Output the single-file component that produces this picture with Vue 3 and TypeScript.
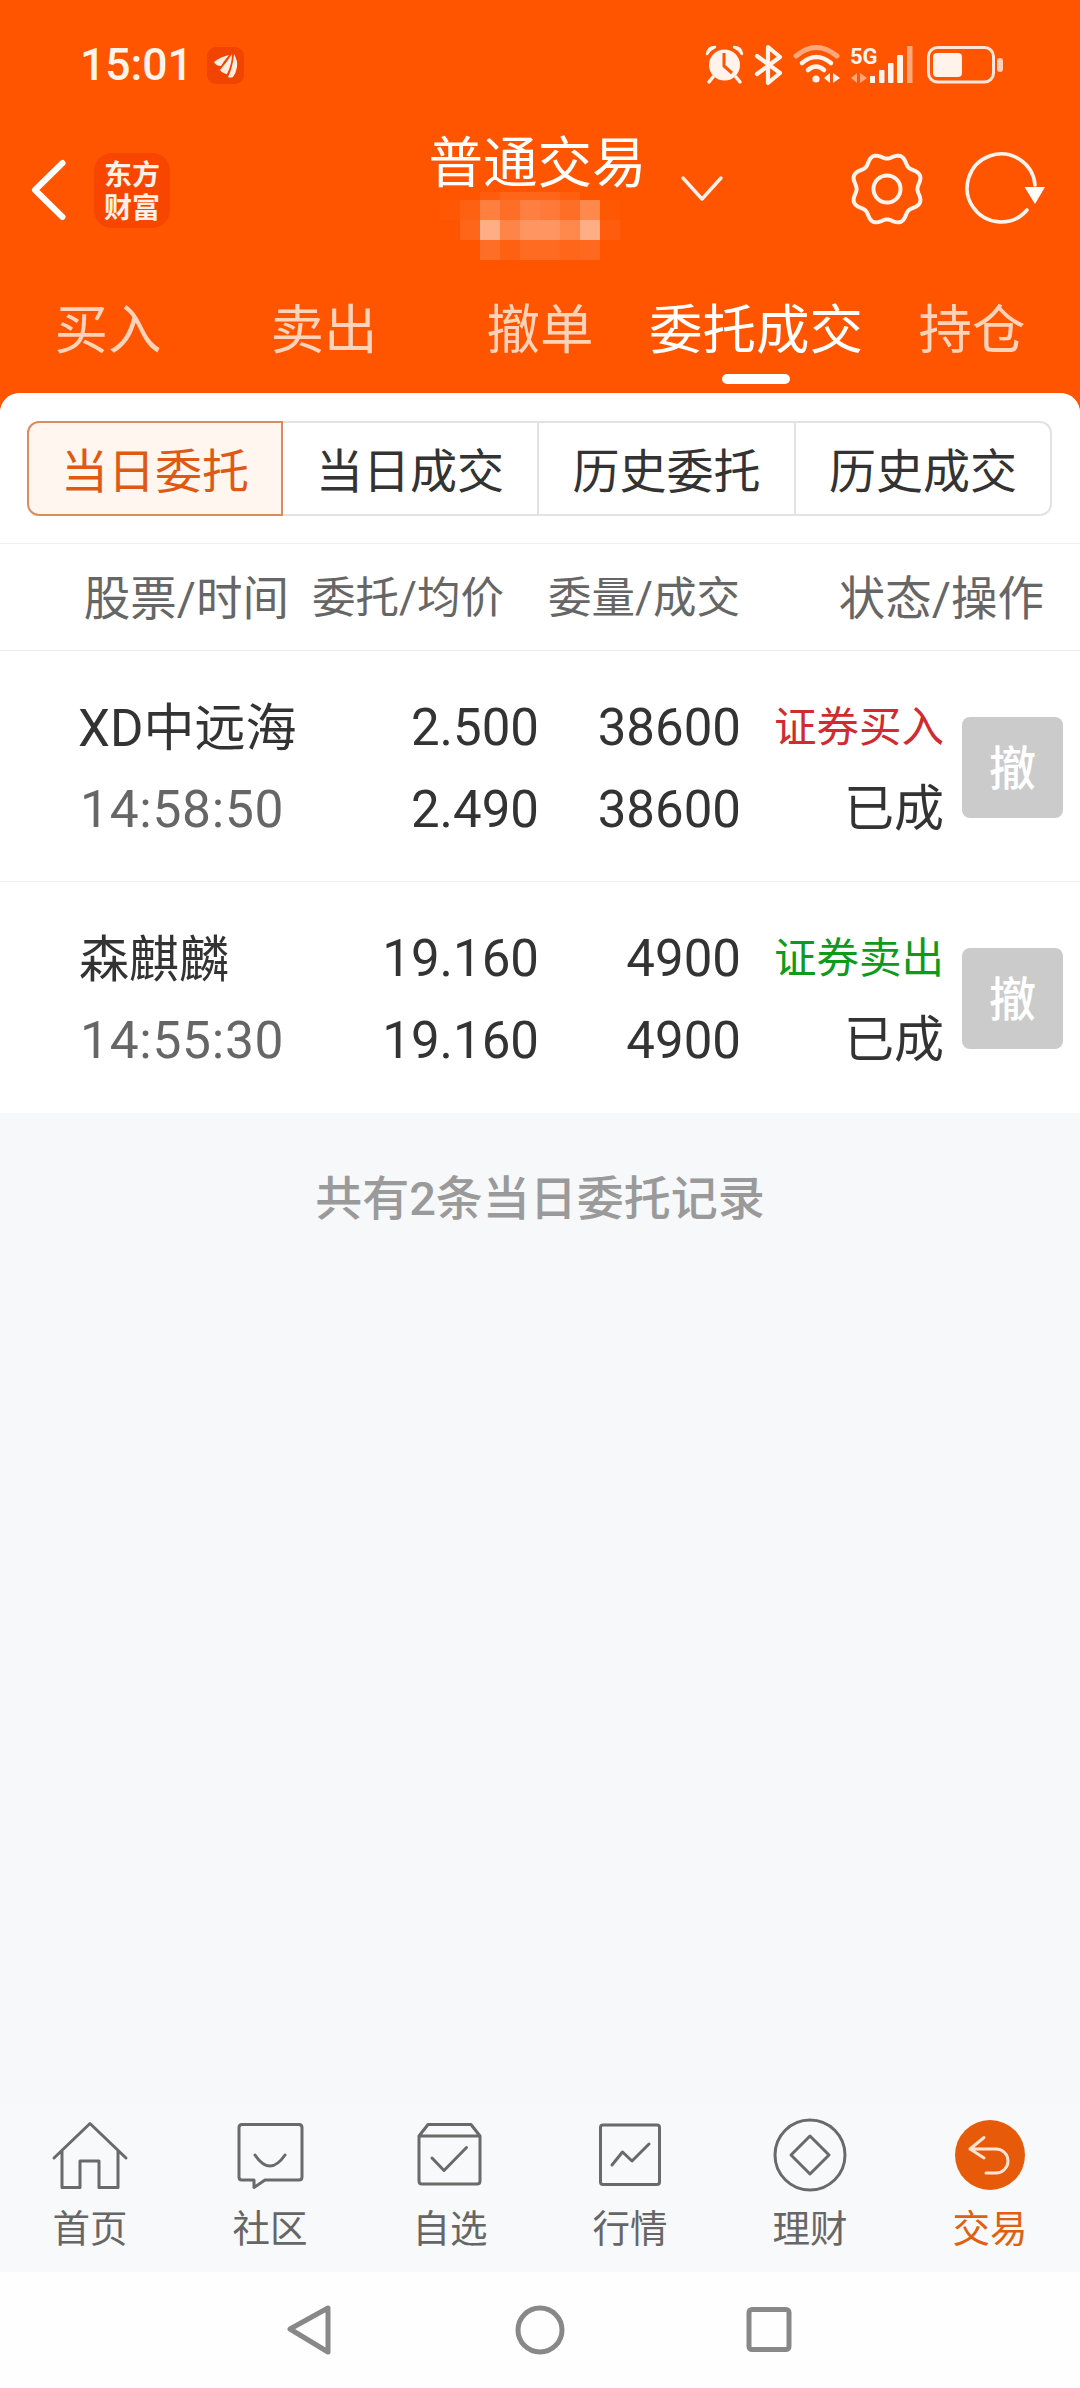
<script setup lang="ts">
const mainTabs = [
  { label: '买入', active: false },
  { label: '卖出', active: false },
  { label: '撤单', active: false },
  { label: '委托成交', active: true },
  { label: '持仓', active: false },
]
const segments = ['当日委托', '当日成交', '历史委托', '历史成交']

const heads = [
  { label: '股票/时间', small: false },
  { label: '委托/均价', small: true },
  { label: '委量/成交', small: true },
  { label: '状态/操作', small: false },
]

const orders = [
  { name: 'XD中远海', nameSmall: false, time: '14:58:50', price: '2.500', avg: '2.490', qty: '38600', done: '38600', side: '证券买入', sideClass: 'buy', status: '已成' },
  { name: '森麒麟', nameSmall: true, time: '14:55:30', price: '19.160', avg: '19.160', qty: '4900', done: '4900', side: '证券卖出', sideClass: 'sell', status: '已成' },
]

const mosaicAlpha = [
  0, 0, 0.05, 0.1, 0.1, 0.1, 0.06, 0, 0,
  0.01, 0.07, 0.25, 0.15, 0.25, 0.22, 0.15, 0.3, 0.02,
  0, 0.1, 0.52, 0.28, 0.38, 0.38, 0.3, 0.52, 0.05,
  0, 0, 0.15, 0.07, 0.13, 0.13, 0.1, 0.12, 0,
]

const gearPath = (() => {
  const pts: string[] = []
  for (let i = 0; i < 144; i++) {
    const t = (i / 144) * Math.PI * 2
    const r = 33 - 2.6 * Math.cos(8 * t)
    const x = 40 + r * Math.sin(t)
    const y = 40 - r * Math.cos(t)
    pts.push(`${x.toFixed(2)} ${y.toFixed(2)}`)
  }
  return 'M' + pts.join('L') + 'Z'
})()

const bottomTabs = [
  { label: '首页', active: false, d: 'M4 43L40 8.5L76 43M12 36V72.5H30V46H49V72.5H68V36' },
  { label: '社区', active: false, d: 'M12 9.5H69Q72 9.5 72 12.5V62Q72 65 69 65H35L24 72.5V65H12Q9 65 9 62V12.5Q9 9.5 12 9.5ZM25 40Q40 62 55 40' },
  { label: '自选', active: false, d: 'M9 21H70M9 21V66Q9 69 12 69H67Q70 69 70 66V21L61 9.5H18L9 21ZM22 43L34 55.5L56.5 32.5' },
  { label: '行情', active: false, d: 'M13 10H67Q69.5 10 69.5 12.5V67Q69.5 69.5 67 69.5H13Q10.5 69.5 10.5 67V12.5Q10.5 10 13 10ZM22 50L32.5 37L42 46L59 29' },
  { label: '理财', active: false, d: 'M5 40A35 35 0 1 1 75 40A35 35 0 1 1 5 40ZM21 40L40 21L59 40L40 59Z' },
  { label: '交易', active: true, d: 'M34 22.5L20 34L34 43M20 34H46A12 12 0 0 1 46 58H36' },
]
</script>

<template>
  <div class="app">
    <header class="header">
      <div class="status">
        <div class="status-left">
          <span class="clock">15:01</span>
          <span class="notify">
            <svg width="37" height="37" viewBox="0 0 37 37" fill="#FFEDE0">
              <path d="M7 15Q13 10 22 8Q17 14 14 19Q9 19 7 15Z" />
              <path d="M13 23Q20 15 25 7Q25 17 20 27Q15 26 13 23Z" />
              <path d="M21 30Q26 20 27 7Q31 14 30 20Q29 26 26 30Q23 31 21 30Z" />
            </svg>
          </span>
        </div>
        <svg class="status-icons" width="310" height="50" viewBox="0 0 310 50">
          <g>
            <circle cx="24.5" cy="25" r="15.5" fill="#FFF3EC" />
            <path d="M7 14Q8 7 15 7Q10 9 7 14ZM42 14Q41 7 34 7Q39 9 42 14Z" fill="#FFF3EC" stroke="#FFF3EC" stroke-width="2.5" stroke-linejoin="round" />
            <path d="M13 37L9 42M36 37L40 42" stroke="#FFF3EC" stroke-width="3.5" stroke-linecap="round" />
            <path d="M24 13V26L32 33" fill="none" stroke="#FF5500" stroke-width="3" />
          </g>
          <path d="M57 16L80 33L68 43V7L80 17L57 34" fill="none" stroke="#FFF3EC" stroke-width="4.2" stroke-linejoin="round" stroke-linecap="round" />
          <g fill="none" stroke-linecap="round">
            <path d="M96 16Q116 -1 137 16" stroke="#FFA77C" stroke-width="5" />
            <path d="M102 23Q116 11 131 23" stroke="#FFF3EC" stroke-width="4.5" />
            <path d="M108 30Q116 23 124 30" stroke="#FFF3EC" stroke-width="4.5" />
          </g>
          <circle cx="116" cy="39" r="3.6" fill="#FFF3EC" />
          <path d="M124 38L130 33V43ZM133 33V43L140 38Z" fill="#FFF3EC" />
          <text x="150" y="24" class="net">5G</text>
          <path d="M151 38L157 33V43ZM160 33V43L167 38Z" fill="#FFA77C" />
          <g fill="#FFF3EC">
            <rect x="170" y="36" width="5" height="7" />
            <rect x="179" y="30" width="5.5" height="13" rx="1" />
            <rect x="188" y="23" width="5.5" height="20" rx="1" />
            <rect x="197" y="15" width="6" height="28" rx="1" />
          </g>
          <rect x="207" y="6" width="5.5" height="37" fill="#FFA77C" />
          <rect x="228.5" y="7.5" width="65" height="34.5" rx="9" fill="none" stroke="#FFE5D8" stroke-width="3" />
          <rect x="233" y="13" width="29" height="24" rx="4" fill="#FFF3EC" />
          <rect x="297" y="18" width="6" height="14" rx="3" fill="#FFD0B5" />
        </svg>
      </div>

      <div class="nav">
        <div class="nav-left">
          <svg width="40" height="68" viewBox="0 0 40 68">
            <path d="M33.5 7L6 34L33.5 61" fill="none" stroke="#fff" stroke-width="6" stroke-linecap="round" stroke-linejoin="round" />
          </svg>
          <div class="logo"><span>东方</span><span>财富</span></div>
        </div>
        <div class="nav-center">
          <div class="title">普通交易</div>
          <div class="mosaic">
            <i
              v-for="(a, i) in mosaicAlpha"
              :key="i"
              :style="{ backgroundColor: `rgba(255,255,255,${a})` }"
            ></i>
          </div>
        </div>
        <svg class="caret" width="48" height="30" viewBox="0 0 48 30">
          <path d="M5 5L24 26L43 5" fill="none" stroke="#FFF0E8" stroke-width="3.4" stroke-linecap="round" stroke-linejoin="round" />
        </svg>
        <div class="nav-right">
          <svg width="80" height="80" viewBox="0 0 80 80" fill="none" stroke="#FFF3EC" stroke-width="4">
            <path :d="gearPath" stroke-linejoin="round" />
            <circle cx="40" cy="40" r="13.5" />
          </svg>
          <svg width="84" height="80" viewBox="0 0 84 80" fill="none">
            <path d="M63 61A34 34 0 1 1 71 36" stroke="#FFF3EC" stroke-width="3.6" stroke-linecap="round" />
            <path d="M60.5 38H81L71 55Z" fill="#fff" />
          </svg>
        </div>
      </div>

      <nav class="tabs">
        <div v-for="t in mainTabs" :key="t.label" class="tab" :class="{ on: t.active }">
          <span class="tab-text">{{ t.label }}</span>
          <span class="tab-bar"></span>
        </div>
      </nav>
    </header>

    <main class="sheet">
      <section class="panel">
        <div class="seg">
          <div v-for="(s, i) in segments" :key="s" class="seg-item" :class="{ on: i === 0 }">{{ s }}</div>
        </div>
        <div class="thead">
          <span v-for="h in heads" :key="h.label" :class="{ small: h.small }">{{ h.label }}</span>
        </div>
        <div v-for="o in orders" :key="o.time" class="row">
          <span class="name" :class="{ small: o.nameSmall }">{{ o.name }}</span>
          <span class="num">{{ o.price }}</span>
          <span class="num">{{ o.qty }}</span>
          <span class="side" :class="o.sideClass">{{ o.side }}</span>
          <button class="cancel" type="button">撤</button>
          <span class="time">{{ o.time }}</span>
          <span class="num">{{ o.avg }}</span>
          <span class="num">{{ o.done }}</span>
          <span class="state">{{ o.status }}</span>
        </div>
      </section>
      <p class="summary">共有2条当日委托记录</p>
    </main>

    <footer class="bottom">
      <div v-for="b in bottomTabs" :key="b.label" class="bitem" :class="{ on: b.active }">
        <svg width="80" height="80" viewBox="0 0 80 80" fill="none">
          <circle v-if="b.active" cx="40" cy="40" r="35" fill="#E65A0A" />
          <path
            :d="b.d"
            :stroke="b.active ? '#FFE3D2' : '#6A6A6A'"
            stroke-width="3"
            stroke-linecap="round"
            stroke-linejoin="round"
          />
        </svg>
        <span>{{ b.label }}</span>
      </div>
    </footer>

    <div class="sysnav">
      <svg width="56" height="56" viewBox="0 0 56 56" fill="none" stroke="#888" stroke-width="5" stroke-linejoin="round">
        <path d="M8 27L46 6V50Z" />
      </svg>
      <svg width="56" height="56" viewBox="0 0 56 56" fill="none" stroke="#888" stroke-width="5">
        <circle cx="28" cy="28" r="22" />
      </svg>
      <svg width="56" height="56" viewBox="0 0 56 56" fill="none" stroke="#888" stroke-width="5">
        <rect x="7" y="7.5" width="40" height="40" rx="3" />
      </svg>
    </div>
  </div>
</template>

<style scoped>
.app {
  width: 1080px;
  height: 2388px;
  display: flex;
  flex-direction: column;
  overflow: hidden;
  background: #ff5500;
  font-family: Roboto, "Noto Sans CJK SC", sans-serif;
  color: #333;
}
.header {
  height: 393px;
  flex: none;
  color: #fff;
}
.status {
  height: 130px;
  display: flex;
  align-items: center;
  justify-content: space-between;
  padding: 0 70px 0 80px;
}
.status-left {
  display: flex;
  align-items: center;
  gap: 14px;
}
.clock {
  font-size: 44.5px;
  font-weight: 500;
  line-height: 50px;
  color: #fff3ec;
}
.notify {
  width: 37px;
  height: 37px;
  border-radius: 9px;
  background: #f04400;
  display: flex;
}
.status-icons {
  display: block;
}
.net {
  font-size: 22px;
  font-weight: 700;
  fill: #fff3ec;
}
.nav {
  height: 130px;
  display: flex;
  align-items: flex-start;
}
.nav-left {
  width: 425px;
  height: 120px;
  flex: none;
  display: flex;
  align-items: center;
  gap: 25px;
  padding-left: 29px;
  box-sizing: border-box;
}
.logo {
  width: 76px;
  height: 75px;
  border-radius: 18px;
  background: #f84500;
  display: flex;
  flex-direction: column;
  align-items: center;
  justify-content: center;
  font-family: "Noto Sans CJK SC", sans-serif;
  font-size: 28px;
  font-weight: 700;
  line-height: 33px;
  color: #fff0e8;
}
.nav-center {
  width: 225px;
  flex: none;
}
.title {
  margin-top: 2px;
  font-size: 54.5px;
  line-height: 54px;
  text-align: center;
  white-space: nowrap;
  font-family: "Noto Sans CJK SC", sans-serif;
}
.mosaic {
  margin: 6px 0 0 15px;
  width: 180px;
  display: grid;
  grid-template-columns: repeat(9, 20px);
  grid-template-rows: 8px 20px 20px 20px;
}
.caret {
  margin: 43px 0 0 28px;
  flex: none;
}
.nav-right {
  margin-left: auto;
  height: 118px;
  display: flex;
  align-items: center;
  gap: 37px;
  padding-right: 32px;
}
.tabs {
  display: grid;
  grid-template-columns: repeat(5, 216px);
}
.tab {
  display: flex;
  flex-direction: column;
  align-items: center;
  padding-top: 41px;
  font-size: 53.5px;
  color: #ffd2ba;
}
.tab.on {
  color: #fff;
}
.tab-text {
  line-height: 60px;
  white-space: nowrap;
}
.tab-bar {
  width: 68px;
  height: 10px;
  margin-top: 13px;
  border-radius: 5px;
}
.tab.on .tab-bar {
  background: #fff;
}
.sheet {
  flex: 1;
  min-height: 0;
  background: #f7f8fa;
  border-radius: 20px 20px 0 0;
  overflow: hidden;
}
.panel {
  background: #fff;
}
.seg {
  display: grid;
  grid-template-columns: 256px 256px 257px 256px;
  width: 1025px;
  height: 95px;
  margin-left: 27px;
  padding-top: 28px;
  font-family: "Noto Sans CJK SC", sans-serif;
}
.seg-item {
  box-sizing: border-box;
  display: flex;
  align-items: center;
  justify-content: center;
  font-size: 47px;
  border: 2px solid #e2e2e2;
  border-left-width: 0;
  padding-bottom: 2px;
}
.seg-item:last-child {
  border-radius: 0 12px 12px 0;
}
.seg-item.on {
  border: 2px solid #d98c5e;
  border-radius: 12px 0 0 12px;
  background: #fff6f0;
  color: #de5a14;
}
.thead {
  margin-top: 27px;
  height: 108px;
  box-sizing: border-box;
  border-top: 1px solid #f0f0f0;
  border-bottom: 1px solid #ececec;
  padding-bottom: 5px;
  display: grid;
  grid-template-columns: 289px 215px 236px 304px;
  align-items: center;
  font-size: 46.5px;
  color: #666;
  text-align: right;
  white-space: nowrap;
}
.thead .small {
  font-size: 43.5px;
}
.row {
  height: 231px;
  box-sizing: border-box;
  padding: 34px 17px 33px 78px;
  display: grid;
  grid-template-columns: 222px 239px 202px 203px 119px;
  grid-template-rows: 82px 82px;
  align-items: center;
  border-bottom: 1px solid #efefef;
}
.row:last-child {
  border-bottom: 0;
}
.name {
  font-size: 51px;
  white-space: nowrap;
  padding-bottom: 5px;
}
.name.small {
  font-size: 50px;
  padding-left: 1px;
}
.num {
  font-size: 51px;
  text-align: right;
  padding-top: 3px;
}
.time {
  font-size: 51.5px;
  color: #666;
  letter-spacing: 0.7px;
  padding: 3px 0 0 2px;
}
.side {
  font-size: 42.5px;
  text-align: right;
  white-space: nowrap;
  padding-bottom: 6px;
}
.side.buy {
  color: #d02b30;
}
.side.sell {
  color: #0e9a1a;
}
.state {
  font-size: 50px;
  text-align: right;
  padding-bottom: 8px;
}
.cancel {
  grid-column: 5;
  grid-row: 1 / span 2;
  justify-self: end;
  width: 101px;
  height: 101px;
  padding: 0 0 6px;
  border: 0;
  border-radius: 8px;
  background: #cbcbcb;
  color: #fff;
  font-family: "Noto Sans CJK SC", sans-serif;
  font-size: 47px;
  font-weight: 500;
}
.summary {
  margin: 56px 0 0;
  text-align: center;
  font-size: 47px;
  font-weight: 500;
  line-height: 60px;
  color: #9a9a9a;
}
.bottom {
  flex: none;
  height: 167px;
  box-sizing: border-box;
  padding-top: 10px;
  display: grid;
  grid-template-columns: repeat(6, 180px);
  background: #f8f9fb;
}
.bitem {
  display: flex;
  flex-direction: column;
  align-items: center;
  font-size: 37.5px;
  line-height: 44px;
  color: #666;
  gap: 12px;
}
.bitem svg {
  display: block;
}
.bitem.on {
  color: #e0600f;
}
.sysnav {
  flex: none;
  height: 116px;
  background: #fefefe;
  display: flex;
  align-items: center;
  justify-content: center;
  gap: 174px;
}
</style>
